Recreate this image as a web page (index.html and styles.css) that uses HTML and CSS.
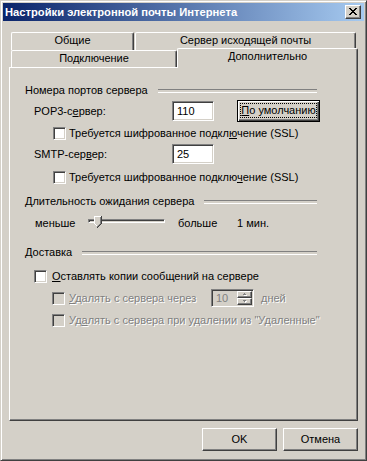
FILE: index.html
```html
<!DOCTYPE html>
<html lang="ru">
<head>
<meta charset="utf-8">
<title>Настройки электронной почты Интернета</title>
<link rel="stylesheet" href="styles.css">
</head>
<body>
<div class="window">
  <div class="titlebar">
    <span class="title">Настройки электронной почты Интернета</span>
    <span class="close"><svg width="8" height="7" viewBox="0 0 8 7" shape-rendering="crispEdges"><path d="M0 0h2v1H0zM6 0h2v1H6zM1 1h2v1H1zM5 1h2v1H5zM2 2h4v1H2zM3 3h2v1H3zM2 4h4v1H2zM1 5h2v1H1zM5 5h2v1H5zM0 6h2v1H0zM6 6h2v1H6z"/></svg></span>
  </div>
  <div class="client">
    <div class="tabrow back">
      <div class="tab t-general">Общие</div>
      <div class="tab t-smtp">Сервер исходящей почты</div>
    </div>
    <div class="tabrow front">
      <div class="tab t-conn">Подключение</div>
      <div class="tab t-adv">Дополнительно</div>
    </div>
    <div class="panel">
      <div class="ghead">Номера портов сервера</div>
      <div class="row r-port r-pop">
        <span class="lbl">POP3-с<u>е</u>рвер:</span>
        <span class="edit">110</span>
        <span class="btn def"><span class="focus"><u>П</u>о умолчанию</span></span>
      </div>
      <div class="row r-ssl r-ssl1">
        <span class="cb"></span><span class="cbt">Требуется шифрованное подкл<u>ю</u>чение (SSL)</span>
      </div>
      <div class="row r-port r-smtp">
        <span class="lbl">SMTP-сер<u>в</u>ер:</span>
        <span class="edit">25</span>
      </div>
      <div class="row r-ssl r-ssl2">
        <span class="cb"></span><span class="cbt">Требуется шифрованное подклю<u>ч</u>ение (SSL)</span>
      </div>

      <div class="ghead g2"><span><u>Д</u>лительность ожидания сервера</span></div>
      <div class="row r-slider">
        <span class="s-less">меньше</span>
        <span class="slider">
          <span class="track"></span>
          <svg class="thumb" width="8" height="12" viewBox="0 0 8 12" shape-rendering="crispEdges">
            <path d="M0 0h8v8l-4 4l-4 -4z" fill="#d4d0c8"/>
            <path d="M0 0h7v1H1v7H0z" fill="#fff"/>
            <path d="M1 8h1v1H1zM2 9h1v1H2z" fill="#fff"/>
            <path d="M7 0h1v8H7zM6 8h1v1H6zM5 9h1v1H5zM4 10h1v1H4zM3 11h1v1H3z" fill="#404040"/>
            <path d="M6 1h1v7H6zM5 8h1v1H5zM4 9h1v1H4zM3 10h1v1H3z" fill="#808080"/>
          </svg>
        </span>
        <span class="s-more">больше</span>
        <span class="s-val">1 мин.</span>
      </div>

      <div class="ghead g3">Доставка</div>
      <div class="row r-keep">
        <span class="cb"></span><span class="cbt"><u>О</u>ставлять копии сообщений на сервере</span>
      </div>
      <div class="row r-del r-del1">
        <span class="cb off"></span><span class="cbt dis w-del"><u>У</u>далять с сервера через</span>
        <span class="spin">
          <span class="val">10</span>
          <span class="arr">
            <span class="ab"><svg width="4" height="3" viewBox="0 0 4 3" shape-rendering="crispEdges"><path d="M2 1h1v1H2zM1 2h3v1H1z" fill="#fff"/><path d="M1 0h1v1H1zM0 1h3v1H0z" fill="#808080"/></svg></span>
            <span class="ab"><svg width="4" height="3" viewBox="0 0 4 3" shape-rendering="crispEdges"><path d="M1 1h3v1H1zM2 2h1v1H2z" fill="#fff"/><path d="M0 0h3v1H0zM1 1h1v1H1z" fill="#808080"/></svg></span>
          </span>
        </span>
        <span class="cbt dis days">дней</span>
      </div>
      <div class="row r-del r-del2">
        <span class="cb off"></span><span class="cbt dis">Уд<u>а</u>лять с сервера при удалении из "Удаленные"</span>
      </div>
    </div>
    <div class="buttons">
      <span class="btn">OK</span>
      <span class="btn">Отмена</span>
    </div>
  </div>
</div>
</body>
</html>
```
FILE: styles.css
```css
* { box-sizing: border-box; }
html, body { margin: 0; padding: 0; }
body {
  background: #d4d0c8;
  font-family: "Liberation Sans", Arial, sans-serif;
  font-size: 11px;
  line-height: 13px;
  color: #000;
}
u { text-decoration: underline; text-underline-offset: 1px; }

.window {
  width: 367px;
  height: 461px;
  padding: 2px;
  border: 1px solid;
  border-color: #d4d0c8 #404040 #404040 #d4d0c8;
  box-shadow: inset 1px 1px #fff, inset -1px -1px #808080;
  background: #d4d0c8;
  display: flex;
  flex-direction: column;
}

.titlebar {
  flex: none;
  height: 18px;
  display: flex;
  align-items: center;
  padding-left: 2px;
  background: linear-gradient(to right, #0a246a, #a6caf0);
  color: #fff;
  font-weight: bold;
  font-size: 11.2px;
  white-space: nowrap;
}
.close {
  margin-left: auto;
  margin-right: 3px;
  width: 16px;
  height: 14px;
  background: #d4d0c8;
  border: 1px solid;
  border-color: #fff #404040 #404040 #fff;
  box-shadow: inset -1px -1px #808080;
  display: flex;
  align-items: center;
  justify-content: center;
  padding-bottom: 1px;
}
.close svg { display: block; fill: #000; }

.client {
  flex: 1;
  display: flex;
  flex-direction: column;
  padding: 11px 6px 7px;
}

.tabrow {
  flex: none;
  display: flex;
  align-items: flex-start;
  padding-left: 2px;
}
.tabrow.back { height: 18px; }
.tabrow.front { height: 17px; }
.tab {
  height: 100%;
  background: #d4d0c8;
  border: 1px solid;
  border-bottom: 0;
  border-color: #fff #404040 #fff #fff;
  box-shadow: inset -1px 0 #808080;
  border-radius: 2px 2px 0 0;
  text-align: center;
  padding-top: 1px;
  white-space: nowrap;
}
.t-general { width: 123px; }
.t-smtp { width: 221px; margin-left: 1px; }
.t-conn { width: 166px; }
.t-adv {
  width: 181px;
  height: 20px;
  margin-top: -2px;
  position: relative;
  z-index: 1;
}

.panel {
  flex: none;
  height: 354px;
  border: 1px solid;
  border-color: #fff #404040 #404040 #fff;
  box-shadow: inset -1px -1px #808080;
  padding: 16px 0 0 15px;
}

.ghead {
  display: flex;
  align-items: center;
  width: 292px;
  height: 13px;
  white-space: nowrap;
}
.ghead::after {
  content: "";
  flex: 1;
  margin-left: 10px;
  height: 2px;
  border-top: 1px solid #808080;
  border-bottom: 1px solid #fff;
}
.g2 { margin-top: 10px; }
.g3 { margin-top: 15px; }

.row {
  display: flex;
  align-items: center;
  white-space: nowrap;
}
.r-port { padding-left: 9px; }
.r-pop { margin-top: 3px; height: 22px; }
.r-smtp { margin-top: 3px; height: 20px; }
.lbl { width: 138px; }

.edit {
  width: 42px;
  height: 20px;
  background: #fff;
  border: 1px solid;
  border-color: #808080 #fff #fff #808080;
  box-shadow: inset 1px 1px #404040, inset -1px -1px #d4d0c8;
  padding-left: 4px;
  line-height: 18px;
}

.btn {
  display: flex;
  align-items: center;
  justify-content: center;
  background: #d4d0c8;
  border: 1px solid;
  border-color: #fff #404040 #404040 #fff;
  box-shadow: inset -1px -1px #808080;
}
.btn.def {
  margin-left: 23px;
  width: 83px;
  height: 22px;
  border-color: #000;
  box-shadow: inset 1px 1px #fff, inset -1px -1px #404040, inset -2px -2px #808080;
  padding: 2px 3px 3px 3px;
}
.focus {
  flex: 1;
  align-self: stretch;
  border: 1px dotted #000;
  display: flex;
  align-items: center;
  justify-content: center;
}

.r-ssl { height: 16px; padding-left: 28px; }
.r-ssl1 { margin-top: 3px; }
.r-ssl2 { margin-top: 5px; }

.cb {
  flex: none;
  width: 13px;
  height: 13px;
  background: #fff;
  border: 1px solid;
  border-color: #808080 #fff #fff #808080;
  box-shadow: inset 1px 1px #404040, inset -1px -1px #d4d0c8;
}
.cb.off { background: #d4d0c8; }
.cbt { margin-left: 3px; }
.dis { color: #808080; text-shadow: 1px 1px #fff; }

.r-slider { margin-top: 7px; height: 16px; padding-left: 10px; }
.s-less { width: 53px; }
.slider {
  position: relative;
  width: 77px;
  height: 16px;
  padding-top: 4px;
}
.track {
  display: block;
  height: 4px;
  border: 1px solid;
  border-color: #808080 #fff #fff #808080;
  box-shadow: inset 1px 1px #404040;
}
.thumb { position: absolute; left: 6px; top: 1px; display: block; }
.s-more { margin-left: 13px; width: 59px; }

.r-keep { margin-top: 9px; height: 16px; padding-left: 9px; }
.r-keep .cbt { margin-left: 5px; }

.r-del { padding-left: 27px; }
.r-del .cbt { margin-left: 4px; }
.r-del1 { margin-top: 5px; height: 18px; }
.r-del2 { margin-top: 5px; height: 16px; }
.w-del { width: 142px; }
.r-del1 .days { margin-left: 7px; }

.spin {
  display: flex;
  width: 43px;
  height: 18px;
  padding: 1px;
  background: #d4d0c8;
  border: 1px solid;
  border-color: #808080 #fff #fff #808080;
  box-shadow: inset 1px 1px #404040, inset -1px -1px #d4d0c8;
}
.spin .val {
  flex: 1;
  padding-left: 3px;
  color: #808080;
  line-height: 14px;
}
.spin .arr {
  width: 15px;
  display: flex;
  flex-direction: column;
}
.ab {
  flex: 1;
  display: flex;
  align-items: center;
  justify-content: center;
  border: 1px solid;
  border-color: #fff #404040 #404040 #fff;
  box-shadow: inset -1px -1px #808080;
}
.ab svg { display: block; }

.buttons {
  flex: none;
  margin-top: 7px;
  display: flex;
  justify-content: flex-end;
  gap: 6px;
}
.buttons .btn { width: 75px; height: 23px; }
```
